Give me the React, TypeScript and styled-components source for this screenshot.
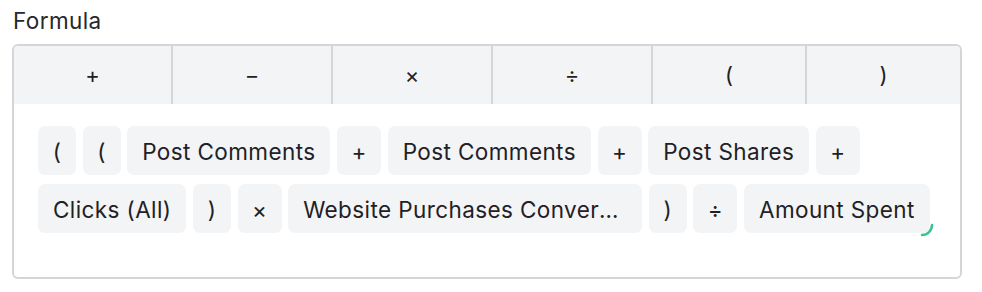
import styled, { createGlobalStyle } from 'styled-components';

const GlobalStyle = createGlobalStyle`
  body {
    margin: 0;
    background: #ffffff;
    font-family: Inter, "Noto Sans", sans-serif;
    color: #1f2124;
  }
`;

const Wrapper = styled.div({
  padding: '6px 20px 0 12px',
  width: '950px',
});

const Label = styled.div({
  fontSize: '22.5px',
  lineHeight: '30px',
  letterSpacing: '0.4px',
  color: '#26282b',
  paddingLeft: '1px',
  marginBottom: '8px',
});

const FormulaBox = styled.div({
  border: '2px solid #d3d5d9',
  borderRadius: '6px',
  overflow: 'hidden',
});

const Toolbar = styled.div({
  display: 'grid',
  gridTemplateColumns: '159px 160px 160px 160px 154px 1fr',
  background: '#f3f4f6',
  height: '58px',
});

const OperatorButton = styled.button<{ $last?: boolean }>(({ $last }) => ({
  border: 'none',
  borderRight: $last ? 'none' : '2px solid #d3d5d9',
  background: 'transparent',
  fontFamily: 'inherit',
  fontSize: '22px',
  color: '#1f2124',
  display: 'flex',
  alignItems: 'center',
  justifyContent: 'center',
  padding: 0,
}));

const Expression = styled.div({
  display: 'flex',
  flexWrap: 'wrap',
  gap: '9px 6.6px',
  padding: '22px 24px 44px',
  minHeight: '98px',
  boxSizing: 'content-box',
  alignContent: 'flex-start',
});

const Token = styled.span<{ $kind: 'paren' | 'op' | 'field' }>(({ $kind }) => ({
  display: 'inline-block',
  height: '49px',
  lineHeight: '51px',
  boxSizing: 'border-box',
  padding: $kind === 'field' ? '0 15px' : '0',
  width: $kind === 'paren' ? '38px' : $kind === 'op' ? '44px' : 'auto',
  textAlign: 'center',
  background: '#f3f4f6',
  borderRadius: '7px',
  fontSize: '22.5px',
  letterSpacing: '0.4px',
  color: '#1f2124',
  maxWidth: '354px',
  whiteSpace: 'nowrap',
  overflow: 'hidden',
  textOverflow: 'ellipsis',
}));

const CursorWrap = styled.span({
  position: 'relative',
  display: 'inline-flex',
});

const Spinner = styled.svg({
  position: 'absolute',
  right: '-4px',
  bottom: '-4px',
});

const operators = ['+', '−', '×', '÷', '(', ')'];

const tokens: { kind: 'paren' | 'op' | 'field'; text: string }[] = [
  { kind: 'paren', text: '(' },
  { kind: 'paren', text: '(' },
  { kind: 'field', text: 'Post Comments' },
  { kind: 'op', text: '+' },
  { kind: 'field', text: 'Post Comments' },
  { kind: 'op', text: '+' },
  { kind: 'field', text: 'Post Shares' },
  { kind: 'op', text: '+' },
  { kind: 'field', text: 'Clicks (All)' },
  { kind: 'paren', text: ')' },
  { kind: 'op', text: '×' },
  { kind: 'field', text: 'Website Purchases Conversion Value' },
  { kind: 'paren', text: ')' },
  { kind: 'op', text: '÷' },
];

const App: React.FC = () => (
  <>
    <GlobalStyle />
    <Wrapper>
      <Label>Formula</Label>
      <FormulaBox>
        <Toolbar>
          {operators.map((op, i) => (
            <OperatorButton key={i} $last={i === operators.length - 1}>
              {op}
            </OperatorButton>
          ))}
        </Toolbar>
        <Expression>
          {tokens.map((t, i) => (
            <Token key={i} $kind={t.kind}>
              {t.text}
            </Token>
          ))}
          <CursorWrap>
            <Token $kind="field">Amount Spent</Token>
            <Spinner width="14" height="14" viewBox="0 0 14 14">
              <path
                d="M12 2 A10 10 0 0 1 2 12"
                fill="none"
                stroke="#3fc28f"
                strokeWidth="2.5"
                strokeLinecap="round"
              />
            </Spinner>
          </CursorWrap>
        </Expression>
      </FormulaBox>
    </Wrapper>
  </>
);

export default App;
